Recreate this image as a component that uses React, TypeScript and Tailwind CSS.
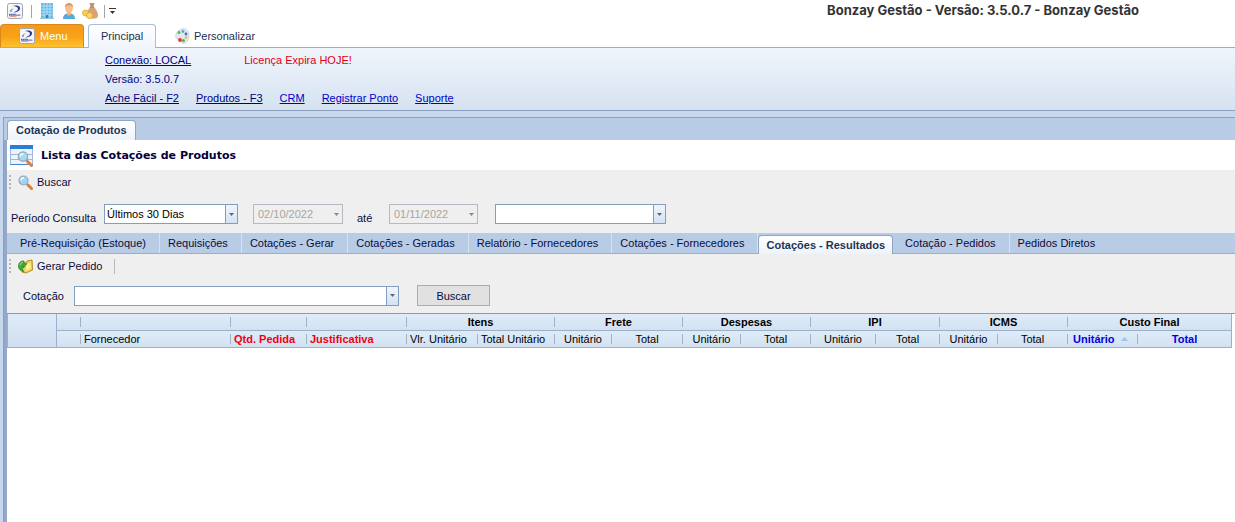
import { useState } from 'react';
import clsx from 'clsx';

const TABS = [
  'Pré-Requisição (Estoque)',
  'Requisições',
  'Cotações - Gerar',
  'Cotações - Geradas',
  'Relatório - Fornecedores',
  'Cotações - Fornecedores',
  'Cotações - Resultados',
  'Cotação - Pedidos',
  'Pedidos Diretos',
];

const COLUMN_WIDTHS = [50, 23, 150, 76, 100, 71, 77, 57, 71, 58, 70, 65, 64, 58, 70, 70, 94];

const GROUPS = ['Itens', 'Frete', 'Despesas', 'IPI', 'ICMS', 'Custo Final'];

interface Column {
  label: string;
  className?: string;
  sorted?: boolean;
}

const COLUMNS: Column[] = [
  { label: 'Fornecedor', className: 'justify-start pl-[3px]' },
  { label: 'Qtd. Pedida', className: 'justify-start pl-[3px] font-bold text-[#f00010]' },
  { label: 'Justificativa', className: 'justify-start pl-[3px] font-bold text-[#f00010]' },
  { label: 'Vlr. Unitário', className: 'justify-start pl-[3px]' },
  { label: 'Total Unitário', className: 'justify-start pl-[3px]' },
  { label: 'Unitário' },
  { label: 'Total' },
  { label: 'Unitário' },
  { label: 'Total' },
  { label: 'Unitário' },
  { label: 'Total' },
  { label: 'Unitário' },
  { label: 'Total' },
  { label: 'Unitário', className: 'justify-start pl-[5px] font-bold text-[#0000e0]', sorted: true },
  { label: 'Total', className: 'justify-center font-bold text-[#0000e0]' },
];

function LogoIcon() {
  return (
    <svg width="16" height="16" viewBox="0 0 16 16" aria-hidden="true">
      <rect x="0.5" y="0.5" width="15" height="15" rx="2" fill="#f6f6f9" stroke="#a3a5ae" />
      <path d="M5.500 3c4.500-1.400 8.300.2 7.500 3-.7 2.200-3.400 3.400-7 3.500 2.700-.9 4.700-1.900 5-3.500.3-1.700-2-2.700-5.500-3z" fill="#25388c" />
      <path d="M2.800 9c0-2 1.700-3.500 4.400-3.700C5.300 6.200 4.500 7.200 5 8.600z" fill="#7f8fc4" />
      <path d="M2 11.700h7" stroke="#4c5da3" strokeWidth="2" strokeDasharray="1.600 0.500" />
      <path d="M9 12.200h4.500" stroke="#8d9acb" strokeWidth="1.600" />
      <path d="M2.500 13.400h7" stroke="#d6705c" strokeWidth="0.700" />
    </svg>
  );
}

function BuildingIcon() {
  return (
    <svg width="14" height="16" viewBox="0 0 14 16" aria-hidden="true">
      <rect x="1" width="12" height="15" fill="#63b8e8" />
      <path d="M1 3h12M1 6h12M1 9h12M1 12h12M4 0v15M7 0v15M10 0v15" stroke="#c4e6f8" strokeWidth="0.800" />
      <rect x="6" y="12" width="2" height="3" fill="#2f82bd" />
      <path d="M0 15.500h14" stroke="#9bc4d8" />
    </svg>
  );
}

function PersonIcon() {
  return (
    <svg width="14" height="16" viewBox="0 0 14 16" aria-hidden="true">
      <path d="M1 16c0-4 2-5.500 6-5.500s6 1.500 6 5.500z" fill="#56a9dd" />
      <path d="M5 8h4v3.500L7 13l-2-1.500z" fill="#efb27b" />
      <ellipse cx="7" cy="5.500" rx="3.800" ry="4.800" fill="#f6c08e" />
      <path d="M3 5C2.500 1.500 4.500 0 7 0s4.500 1.500 4 5C10.500 3.200 9 2.600 7 2.600S3.500 3.200 3 5z" fill="#e39a5c" />
    </svg>
  );
}

function MoneyIcon() {
  return (
    <svg width="16" height="16" viewBox="0 0 16 16" aria-hidden="true">
      <path d="M7.500 0h5l-1 3.500h-3z" fill="#c49263" />
      <path d="M8 4h4c2 2 4 5 4 8 0 2-1 3.500-3 3.500H7C4.500 15.500 4 13 5 10c.7-2.500 2-4.500 3-6z" fill="#d7a575" />
      <path d="M8 4h4" stroke="#a96f42" />
      <circle cx="3.500" cy="10" r="3" fill="#f9cf52" stroke="#d9a42b" strokeWidth="0.700" />
      <circle cx="7.500" cy="12.500" r="3" fill="#fbd864" stroke="#d9a42b" strokeWidth="0.700" />
    </svg>
  );
}

function PaletteIcon() {
  return (
    <svg width="15" height="16" viewBox="0 0 15 16" aria-hidden="true">
      <path d="M7 1c4-1 7 2 7 6 0 5-3 9-6 8.500-2-.4-1-2.500-2-3.500S1 12 .8 8.500C.6 5 3 2 7 1z" fill="#e4e8ee" stroke="#c5cbd4" strokeWidth="0.800" />
      <circle cx="4" cy="4.500" r="1.500" fill="#56b948" />
      <circle cx="8" cy="3.500" r="1.400" fill="#54a7e2" />
      <circle cx="11" cy="6" r="1.400" fill="#3c6fc8" />
      <circle cx="11" cy="9.500" r="1.300" fill="#f0b73a" />
      <circle cx="8.500" cy="12.500" r="1.500" fill="#4fae58" />
      <circle cx="5" cy="12" r="1.900" fill="#d93a2b" />
    </svg>
  );
}

function SearchIcon() {
  return (
    <svg width="15" height="15" viewBox="0 0 15 15" aria-hidden="true">
      <path d="M8.500 8.500l1.500 1.500" stroke="#8793a3" strokeWidth="1.500" />
      <path d="M10 10l3.500 3.500" stroke="#e07d35" strokeWidth="3" strokeLinecap="round" />
      <circle cx="5.500" cy="5.500" r="4.500" fill="#9fd3f0" stroke="#93a5b8" strokeWidth="1.200" />
      <path d="M3 5.500c0-2 1.200-2.700 3-2.700" fill="none" stroke="#f5fcff" strokeWidth="1.400" />
    </svg>
  );
}

function ListSearchIcon() {
  return (
    <svg width="24" height="22" viewBox="0 0 24 22" aria-hidden="true">
      <rect x="0.500" y="1.500" width="22" height="18" fill="#edf3fb" stroke="#9db8dc" />
      <rect y="0" width="23" height="4" fill="#2c7fd6" />
      <path d="M0 9.500h23M0 14.500h23" stroke="#9cb6dd" />
      <path d="M0 19.500h23" stroke="#4b86cc" />
      <path d="M16 15l2 2" stroke="#8793a3" strokeWidth="1.500" />
      <path d="M17.500 16.500l4 4" stroke="#e07d35" strokeWidth="3" strokeLinecap="round" />
      <circle cx="13" cy="11.500" r="4.700" fill="#a9d8f1" stroke="#93a5b8" strokeWidth="1.200" />
      <path d="M10.500 11.500c0-2 1.200-2.700 3-2.700" fill="none" stroke="#f5fcff" strokeWidth="1.400" />
    </svg>
  );
}

function OrderIcon() {
  return (
    <svg width="15" height="15" viewBox="0 0 15 15" aria-hidden="true">
      <path d="M6 3l2.500 1.500L9 2l5-1 .5 10L8 14l-4-1z" fill="#f3d750" stroke="#b08d2a" />
      <path d="M8 5.500l4.500-1.500v5.500L8 11.500z" fill="#fbf09a" />
      <path d="M6 12.500C2 12 0 9.500.6 6 1 3.500 3 1.500 6 2L5.500 4l3 1-3 4-.5-2.200C3.500 8.500 4 10.500 6 12.500z" fill="#3eae33" stroke="#23812b" strokeWidth="0.700" />
      <path d="M2 6.500c.2-2 1.500-3 3-3.200" fill="none" stroke="#a5e58c" />
    </svg>
  );
}

function DownArrow({ className }: { className?: string }) {
  return (
    <svg width="5" height="3" viewBox="0 0 5 3" className={className} aria-hidden="true">
      <path d="M0 0h5L2.500 3z" fill="currentColor" />
    </svg>
  );
}

function SortArrow() {
  return (
    <svg width="7" height="4" viewBox="0 0 7 4" aria-hidden="true">
      <path d="M0 4h7L3.500 0z" fill="#9dc3ee" />
    </svg>
  );
}

interface ComboProps {
  label: string;
  value?: string;
  disabled?: boolean;
  className?: string;
}

function Combo({ label, value = '', disabled, className }: ComboProps) {
  return (
    <div className={clsx('relative h-5', className)}>
      <select
        aria-label={label}
        defaultValue={value}
        disabled={disabled}
        className={clsx(
          'block h-5 w-full appearance-none rounded-none border pr-4 text-[11px] leading-4 opacity-100',
          disabled
            ? 'border-[#b5bac2] bg-[#efefef] pl-1 text-[#aaa59b]'
            : 'border-[#859dbd] bg-white pl-0.5 text-black',
        )}
      >
        <option>{value}</option>
      </select>
      <span
        className={clsx(
          'pointer-events-none absolute inset-y-px right-px flex w-3 items-center justify-center',
          disabled
            ? 'text-[#888888]'
            : 'border-l border-[#859dbd] bg-linear-to-b from-[#eff5fc] to-[#d3e2f4] text-[#58677d]',
        )}
      >
        <DownArrow />
      </span>
    </div>
  );
}

function Grip() {
  return <span className="h-[14px] w-0 border-l-2 border-dotted border-[#b4b4b4]" />;
}

function Divider() {
  return <span className="h-2.5 w-0 shrink-0 border-l border-[#9fb2ca]" />;
}

function QuickAccess() {
  return (
    <header className="flex h-6 items-center bg-white pb-0.5 pl-[7px]">
      <LogoIcon />
      <span className="ml-2 h-[13px] w-px bg-[#a5a5a5]" />
      <button type="button" aria-label="Empresas" className="ml-2">
        <BuildingIcon />
      </button>
      <button type="button" aria-label="Clientes" className="ml-2">
        <PersonIcon />
      </button>
      <button type="button" aria-label="Financeiro" className="ml-1.5">
        <MoneyIcon />
      </button>
      <span className="ml-1.5 h-[13px] w-px bg-[#a5a5a5]" />
      <button type="button" aria-label="Personalizar barra" className="ml-1 flex flex-col items-center gap-0.5 text-[#333333]">
        <span className="h-px w-[7px] bg-[#333333]" />
        <DownArrow />
      </button>
      <h1 className="mr-24 mb-0.5 ml-auto font-[Inter,Arial,sans-serif] text-[13px] leading-4 font-bold text-[#333333]">
        Bonzay Gestão - Versão: 3.5.0.7 - Bonzay Gestão
      </h1>
    </header>
  );
}

function Ribbon() {
  return (
    <>
      <nav className="flex h-6 items-end border-b border-[#9aadca] bg-white">
        <button
          type="button"
          className="flex h-[23px] w-[84px] items-center gap-[5px] rounded-t-sm border border-b-0 border-[#d9891c] bg-linear-to-b from-[#f59a1b] via-[#f9a015] to-[#ffc22e] pl-[18px] text-white"
        >
          <LogoIcon />
          Menu
        </button>
        <button
          type="button"
          className="-mb-px ml-1 h-6 w-[68px] rounded-t-sm border border-b-0 border-[#a9bcd8] bg-linear-to-b from-white to-[#f0f5fc] pb-0.5 text-[#1e3050]"
        >
          Principal
        </button>
        <button type="button" className="ml-[19px] flex h-[23px] items-center gap-1 text-[#1e3050]">
          <PaletteIcon />
          Personalizar
        </button>
      </nav>
      <section className="border-b border-[#8b9fbf] bg-linear-to-b from-[#f0f5fc] to-[#d6e2f1] pt-[3px] pb-0.5 pl-[105px] leading-[19px] text-[#000080]">
        <div className="flex gap-[53px]">
          <a href="#conexao" className="underline">Conexão: LOCAL</a>
          <span className="text-[#e00010]">Licença Expira HOJE!</span>
        </div>
        <div>Versão: 3.5.0.7</div>
        <div className="flex gap-[17px]">
          <a href="#ache-facil" className="underline">Ache Fácil - F2</a>
          <a href="#produtos" className="underline">Produtos - F3</a>
          <a href="#crm" className="text-[#0000cc] underline">CRM</a>
          <a href="#ponto" className="text-[#0000cc] underline">Registrar Ponto</a>
          <a href="#suporte" className="text-[#0000cc] underline">Suporte</a>
        </div>
      </section>
    </>
  );
}

function QuotesTable() {
  return (
    <table className="w-full table-fixed border-separate border-spacing-0 border-r border-[#9db0ca] text-black">
      <colgroup>
        {COLUMN_WIDTHS.map((width, i) => (
          <col key={i} style={{ width }} />
        ))}
      </colgroup>
      <thead>
        <tr className="bg-linear-to-b from-[#dfebf8] to-[#d2e1f1]">
          <th rowSpan={2} className="border border-t-0 border-[#9db0ca] bg-linear-to-b from-[#dfebf8] to-[#cfdff0] p-0" />
          {[0, 1, 2, 3].map((i) => (
            <th key={i} className="h-[17px] border-b border-[#9db0ca] p-0">
              {i > 0 && (
                <div className="flex h-4 items-center">
                  <Divider />
                </div>
              )}
            </th>
          ))}
          {GROUPS.map((group) => (
            <th key={group} colSpan={2} className="h-[17px] border-b border-[#9db0ca] p-0">
              <div className="flex h-4 items-center">
                <Divider />
                <span className="flex-1 text-center">{group}</span>
              </div>
            </th>
          ))}
        </tr>
        <tr className="bg-linear-to-b from-[#dfebf8] to-[#d2e1f1]">
          <th className="h-[17px] border-b border-[#9db0ca] p-0" />
          {COLUMNS.map((column, i) => (
            <th key={i} className="h-[17px] border-b border-[#9db0ca] p-0 font-normal">
              <div className="flex h-4 items-center">
                <Divider />
                <span
                  className={clsx(
                    'flex flex-1 items-center gap-1.5 whitespace-nowrap',
                    column.className ?? 'justify-center',
                  )}
                >
                  {column.label}
                  {column.sorted && <SortArrow />}
                </span>
              </div>
            </th>
          ))}
        </tr>
      </thead>
    </table>
  );
}

export default function App() {
  const [activeTab, setActiveTab] = useState('Cotações - Resultados');

  return (
    <div className="flex min-h-screen flex-col bg-[#c6d7ee] font-['Liberation_Sans',Arial,sans-serif] text-[11px] leading-4 text-[#0b0b3b]">
      <QuickAccess />
      <Ribbon />
      <main className="mt-1.5 ml-[3px] flex flex-1 flex-col border-t border-l border-[#8b9fbf] bg-[#b9cce5]">
        <div className="flex h-[22px] items-end pl-[3px]">
          <button
            type="button"
            className="h-5 rounded-t-sm border border-b-0 border-[#8ea5c5] bg-linear-to-b from-white to-[#edf3fb] px-2 pb-0.5 font-bold text-[#1d3354]"
          >
            Cotação de Produtos
          </button>
        </div>

        <div className="flex flex-1 flex-col border-l-[3px] border-[#94a9c8] bg-white">
          <div className="flex h-[30px] items-center gap-[7px] pt-0.5 pl-[3px]">
            <ListSearchIcon />
            <h2 className="font-['DejaVu_Sans',Verdana,sans-serif] text-[11px] font-bold text-[#00003c]">
              Lista das Cotações de Produtos
            </h2>
          </div>

          <div className="bg-[#efefef] pb-[7px]">
            <div className="flex h-6 items-center pl-0.5">
              <Grip />
              <button type="button" className="ml-[7px] flex items-center gap-1">
                <SearchIcon />
                Buscar
              </button>
            </div>
            <div className="mt-2.5 flex items-start pl-1">
              <span className="w-[93px] pt-1.5">Período Consulta</span>
              <Combo label="Período Consulta" value="Últimos 30 Dias" className="w-[134px]" />
              <Combo label="Data inicial" value="02/10/2022" disabled className="ml-[15px] w-[90px]" />
              <span className="ml-3.5 w-8 pt-1.5">até</span>
              <Combo label="Data final" value="01/11/2022" disabled className="w-[89px]" />
              <Combo label="Filtro" className="ml-[17px] w-[171px]" />
            </div>
          </div>

          <div role="tablist" className="flex h-[21px] items-end border-b border-[#9aadc9] bg-[#b9cce5] pl-[5px]">
            {TABS.map((tab) => (
              <button
                key={tab}
                type="button"
                role="tab"
                aria-selected={tab === activeTab}
                onClick={() => setActiveTab(tab)}
                className={clsx(
                  'whitespace-nowrap',
                  tab === activeTab
                    ? '-mb-px mr-1 h-[19px] rounded-t-sm border border-b-0 border-[#8ea5c5] bg-linear-to-b from-white to-[#edf3fb] px-[7px] font-bold text-[#1d3354]'
                    : 'h-5 border-r border-[#d6e2f2] pr-[13px] pl-2 last:border-r-0',
                )}
              >
                {tab}
              </button>
            ))}
          </div>

          <div className="bg-[#efefef] pb-[7px]">
            <div className="flex h-6 items-center pl-0.5">
              <Grip />
              <button type="button" className="ml-[7px] flex items-center gap-1">
                <OrderIcon />
                Gerar Pedido
              </button>
              <span className="ml-3 h-[15px] w-px bg-[#b8b8b8]" />
            </div>
            <div className="mt-[7px] flex items-center pl-4">
              <span className="w-[51px]">Cotação</span>
              <Combo label="Cotação" className="w-[325px]" />
              <button type="button" className="ml-[18px] h-[21px] w-[73px] border border-[#adadad] bg-[#e1e1e1]">
                Buscar
              </button>
            </div>
          </div>

          <div className="border-t border-[#859dbd] pr-1">
            <QuotesTable />
          </div>
        </div>
      </main>
    </div>
  );
}
